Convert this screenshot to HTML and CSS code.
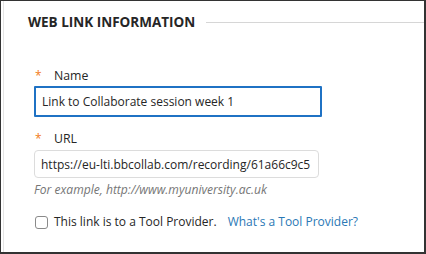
FILE: index.html
```html
<!DOCTYPE html>
<html lang="en">

<head>
  <meta charset="UTF-8">
  <title>Web Link Information</title>
  <link rel="stylesheet" href="styles.css">
</head>

<body>
  <div id="frame">
    <div id="section">
      <div class="section-head">
        <h2>WEB LINK INFORMATION</h2>
        <span class="rule"></span>
      </div>

      <div class="field field-name">
        <label class="field-label" for="link-name"><span class="req">*</span>Name</label>
        <input id="link-name" class="text-input focused" type="text" value="Link to Collaborate session week 1">
      </div>

      <div class="field field-url">
        <label class="field-label" for="link-url"><span class="req">*</span>URL</label>
        <input id="link-url" class="text-input" type="text" value="https://eu-lti.bbcollab.com/recording/61a66c9c5">
        <div class="hint">For example, http://www.myuniversity.ac.uk</div>
      </div>

      <div class="check-row">
        <span class="checkbox"></span>
        <span class="check-label">This link is to a Tool Provider.</span>
        <a class="help-link" href="#">What's a Tool Provider?</a>
      </div>
    </div>
  </div>
</body>

</html>
```

FILE: styles.css
```css
* {
  box-sizing: border-box;
}

body {
  margin: 0;
  font-family: "Open Sans", sans-serif;
  color: #262626;
  background: #fff;
}

#frame {
  width: 426px;
  height: 254px;
  border-style: solid;
  border-color: #333;
  border-width: 1px 2px 2px 1px;
  background: #fff;
  overflow: hidden;
}

#section {
  height: 100%;
  border-left: 1px solid #e4e4e4;
  margin-left: 2px;
  padding: 11px 0 0 30px;
}

.section-head {
  display: flex;
  align-items: center;
  margin-left: -6px;
  gap: 11px;
}

.section-head h2 {
  margin: 0;
  font-size: 13.5px;
  line-height: 20px;
  font-weight: 700;
  color: #262626;
  white-space: nowrap;
}

.rule {
  flex: 1;
  height: 1px;
  background: #d6d6d6;
  margin-top: 1px;
}

.field-name {
  margin-top: 35px;
}

.field-url {
  margin-top: 13px;
}

.field-label {
  display: flex;
  align-items: center;
  font-size: 12.3px;
  line-height: 18px;
  color: #262626;
}

.req {
  color: #f27b18;
  width: 20px;
  padding-left: 1px;
  font-size: 12px;
}

.text-input {
  display: block;
  font-family: "Open Sans", sans-serif;
  font-size: 12px;
  color: #262626;
  background: #fff;
  outline: none;
}

.field-name .text-input {
  margin-top: 1px;
  width: 288px;
  height: 31px;
  border: 2px solid #1f72c4;
  border-radius: 1px;
  padding: 0 0 0 6px;
}

.field-url .text-input {
  margin-top: 2px;
  width: 285px;
  height: 28px;
  border: 1px solid #dcdcdc;
  border-radius: 4px;
  padding: 0 0 0 6px;
}

.hint {
  margin-top: 3px;
  font-size: 12.1px;
  line-height: 17px;
  font-style: italic;
  color: #767676;
}

.check-row {
  display: flex;
  align-items: center;
  margin-top: 15px;
  margin-left: 1px;
  font-size: 12px;
  line-height: 18px;
}

.checkbox {
  width: 13px;
  height: 13px;
  border: 1px solid #8a8a8a;
  border-radius: 3px;
  background: #fff;
  margin-right: 6px;
}

.help-link {
  margin-left: 11px;
  color: #2a78b5;
  text-decoration: none;
}
```
